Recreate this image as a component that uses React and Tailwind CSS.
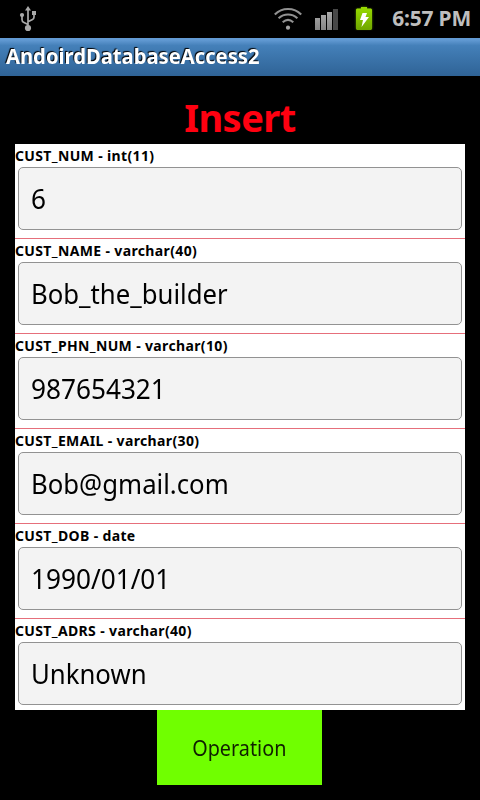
const fields = [
  { label: 'CUST_NUM - int(11)', value: '6' },
  { label: 'CUST_NAME - varchar(40)', value: 'Bob_the_builder' },
  { label: 'CUST_PHN_NUM - varchar(10)', value: '987654321' },
  { label: 'CUST_EMAIL - varchar(30)', value: 'Bob@gmail.com' },
  { label: 'CUST_DOB - date', value: '1990/01/01' },
  { label: 'CUST_ADRS - varchar(40)', value: 'Unknown' },
];

function UsbIcon() {
  return (
    <svg className="ml-[19px] h-[26px] w-[18px]" viewBox="0 0 18 26" fill="none" stroke="#a9a9a9" strokeWidth="1.7">
      <path d="M9 22V4M9 18.500l-4.500-2.300Q3 15.400 3 13.500V10M9 15.800l4.500-2.200Q15 12.800 15 11V8" />
      <path d="M9 0l3 4.500H6z" fill="#a9a9a9" stroke="none" />
      <circle cx="9" cy="22" r="3.100" fill="#a9a9a9" stroke="none" />
      <circle cx="3" cy="9" r="2.100" fill="#a9a9a9" stroke="none" />
      <path d="M13 5h4v4h-4z" fill="#a9a9a9" stroke="none" />
    </svg>
  );
}

function WifiIcon() {
  return (
    <svg className="h-[24px] w-[28px]" viewBox="0 0 28 24" fill="none" stroke="#929292" strokeWidth="2.100">
      <path d="M.8 7.500C8 .2 20 .2 27.200 7.500M4.600 11.300c5.400-5 13.400-5 18.800 0M8.700 15.200c3.300-2.900 7.300-2.900 10.600 0" />
      <circle cx="14" cy="20.700" r="2.100" fill="#a5a5a5" stroke="none" />
    </svg>
  );
}

function SignalIcon() {
  return (
    <svg className="ml-[13px] h-[22px] w-[23px]" viewBox="0 0 23 22">
      <defs>
        <linearGradient id="bar" x1="0" y1="0" x2="0" y2="1">
          <stop offset="0" stopColor="#aaaaaa" />
          <stop offset="1" stopColor="#858585" />
        </linearGradient>
      </defs>
      <path d="M0 10h5v12H0zM6 7h5v15H6zM12 4h5v18h-5z" fill="url(#bar)" />
      <path d="M18 1h5v21h-5z" fill="#484848" />
    </svg>
  );
}

function BatteryIcon() {
  return (
    <svg className="mb-[2px] ml-[15px] h-[28px] w-[22px]" viewBox="0 0 22 28">
      <defs>
        <filter id="glow" x="-20%" y="-20%" width="140%" height="140%">
          <feGaussianBlur stdDeviation="1.300" />
        </filter>
        <linearGradient id="cell" x1="0" y1="0" x2="0" y2="1">
          <stop offset="0" stopColor="#98dc00" />
          <stop offset="1" stopColor="#6fa500" />
        </linearGradient>
      </defs>
      <path d="M3 5h5V3h6v2h5v20H3z" fill="#568000" filter="url(#glow)" />
      <path d="M4 4.500h4V3h6v1.500h4l1 1V25l-1 1H4l-1-1V5.500z" fill="url(#cell)" />
      <path d="M9.500 9H14l-1.500 4H16l-7.500 10 1.500-7H7z" fill="#fff" />
    </svg>
  );
}

function Field({ label, value, last }) {
  const numeric = /^[\d/]+$/.test(value);
  return (
    <div className={last ? 'h-[91px]' : 'h-[95px] border-b border-[#e66f7b]'}>
      <div className="h-[23px] text-[14px] leading-[24px] font-bold tracking-[0.36px] whitespace-pre text-black">
        {label}
      </div>
      <div className="mx-[3px] flex h-[63px] items-center rounded-[5px] border border-[#929292] bg-[#f3f3f3] pt-[2px] pl-[12px] text-[27px] text-black">
        <span className={numeric ? 'origin-left scale-x-[0.97]' : 'origin-left scale-x-[0.953]'}>{value}</span>
      </div>
    </div>
  );
}

export default function App() {
  return (
    <div className="flex h-[800px] w-[480px] flex-col overflow-hidden bg-black font-['Noto_Sans',sans-serif]">
      <header className="flex h-[38px] items-center text-[#bebebe]">
        <UsbIcon />
        <div className="ml-auto flex items-center">
          <WifiIcon />
          <SignalIcon />
          <BatteryIcon />
          <span className="mr-[9px] ml-[17px] w-[79px] text-right text-[21px] font-bold tracking-[-0.2px] whitespace-nowrap">
            6:57 PM
          </span>
        </div>
      </header>
      <div className="h-[38px] bg-linear-to-b from-[#629ad3] from-5% via-[#4480b9] via-20% to-[#2f6396] pl-[6px] text-[21px] leading-[37px] font-bold text-white [text-shadow:-1px_-1px_1px_#000]">
        <span className="inline-block origin-left scale-x-[0.962]">AndoirdDatabaseAccess2</span>
      </div>
      <h1 className="h-[68px] pt-[15px] text-center text-[38px] leading-[52px] font-bold tracking-[-0.5px] text-[#ff0010]">
        Insert
      </h1>
      <main className="mx-[15px] h-[566px] bg-white">
        {fields.map((field, i) => (
          <Field key={field.label} {...field} last={i === fields.length - 1} />
        ))}
      </main>
      <button className="ml-[157px] h-[75px] w-[165px] bg-[#70ff00] text-[22px] text-[#102000]">
        <span className="inline-block scale-x-[0.9]">Operation</span>
      </button>
    </div>
  );
}
